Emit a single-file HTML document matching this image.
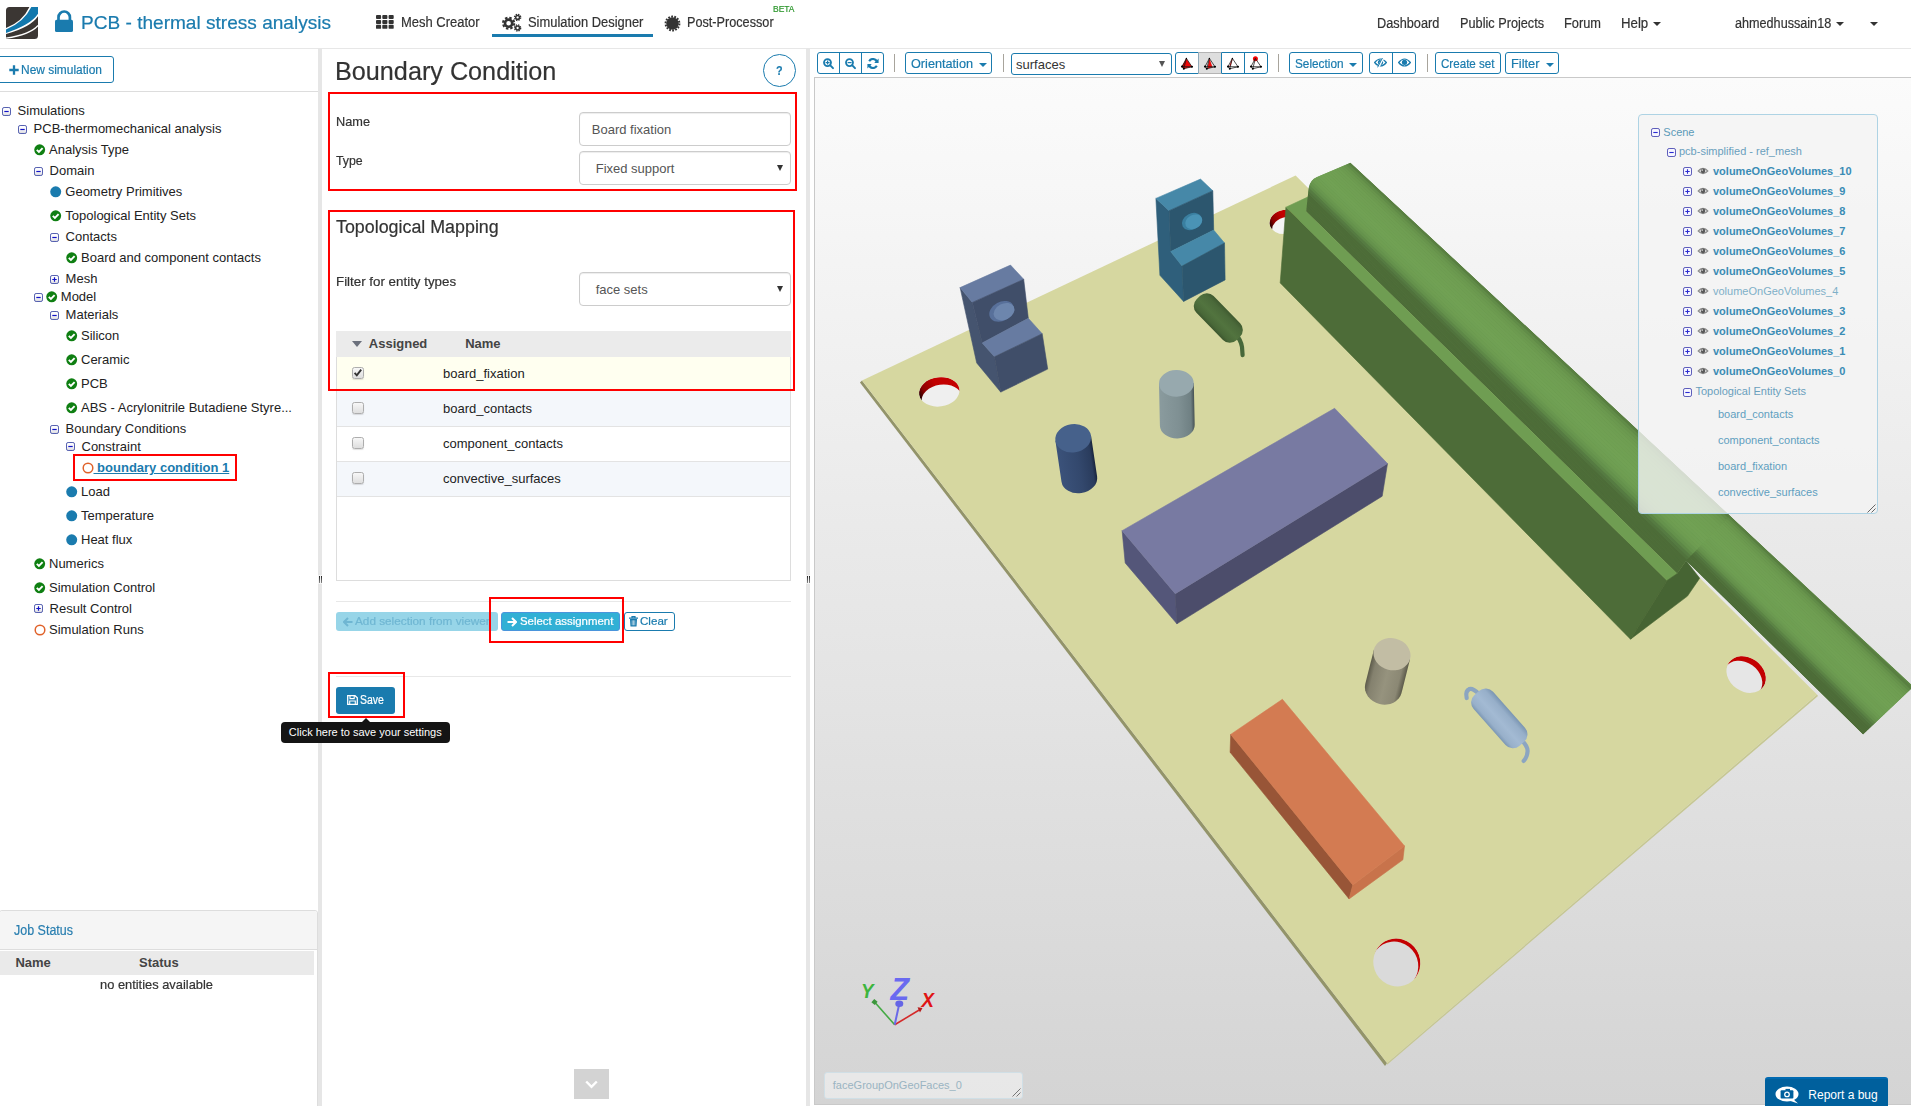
<!DOCTYPE html>
<html><head><meta charset="utf-8"><title>PCB - thermal stress analysis</title>
<style>
*{box-sizing:border-box;margin:0;padding:0}
html,body{width:1911px;height:1106px;overflow:hidden;background:#fff}
body{font-family:"Liberation Sans",sans-serif;font-size:13px;color:#333;position:relative}
.a{position:absolute}
.t{position:absolute;white-space:nowrap;transform-origin:0 50%;line-height:1;-webkit-text-stroke:.2px currentColor}
.f{display:inline-block;white-space:nowrap;transform-origin:0 50%}
.blue{color:#1a7bae}
/* header */
#hdr{left:0;top:0;width:1911px;height:49px;background:#fff;border-bottom:1px solid #e7e7e7}
.car{width:0;height:0;border-left:4px solid transparent;border-right:4px solid transparent;border-top:4px solid #333}
/* panels */
#left{left:0;top:49px;width:318px;height:1057px;background:#fff}
#sp1{left:318px;top:48px;width:4px;height:1058px;background:#e6e6e6}
#mid{left:322px;top:49px;width:484px;height:1057px;background:#fff}
#sp2{left:806px;top:48px;width:4px;height:1058px;background:#e6e6e6}
#view{left:810px;top:49px;width:1101px;height:1057px;background:#fff}
#canvas{left:814px;top:77px;width:1097px;height:1028px;border:1px solid #c9c9c9;border-right:none;background:linear-gradient(#fbfbfb,#d4d4d4);overflow:hidden}
.btn{position:absolute;border:1px solid #1a7bae;border-radius:3px;background:#fff;color:#1a7bae;height:22px}
.rb{position:absolute;border:2px solid #ff0000;z-index:5}
.inp{border:1px solid #ccc;border-radius:4px;background:#fff;box-shadow:inset 0 1px 1px rgba(0,0,0,.075)}
.arr{width:0;height:0;border-left:3.5px solid transparent;border-right:3.5px solid transparent;border-top:6px solid #333}
.cb{width:12px;height:12px;border:1px solid #adadad;border-radius:2.5px;background:linear-gradient(#f7f7f7,#dedede);box-shadow:0 1px 1px rgba(0,0,0,.12)}
.sep{width:1px;height:18px;background:#a8a49c}
/* tree */
.ti{position:absolute;width:11px;height:11px}
.tx{position:absolute;white-space:nowrap;font-size:13px;line-height:15px;color:#222}
</style></head><body>
<div id="hdr" class="a"></div>
<div id="left" class="a"></div>
<div id="sp1" class="a"></div>
<div id="mid" class="a"></div>
<div id="sp2" class="a"></div>
<div id="view" class="a"></div>
<div id="canvas" class="a"></div>

<svg class="a" style="left:6px;top:7px" width="32" height="32" viewBox="0 0 32 32">
<defs><clipPath id="lg"><path d="M3.5 0 H32 V28.5 A3.5 3.5 0 0 1 28.5 32 H0 V3.5 A3.5 3.5 0 0 1 3.5 0 Z"></path></clipPath></defs>
<g clip-path="url(#lg)"><rect width="32" height="32" fill="#3b3633"></rect>
<path d="M0 21 Q16.7 14.5 23.4 0 L32 0 L32 9.2 Q25 20 0 27.1 Z" fill="#fff"></path>
<path d="M0 22.4 Q17.75 15.6 25.3 0 L32 0 L32 6.8 Q24.6 18.05 0 25.9 Z" fill="#1278ad"></path>
<path d="M0 31.2 Q24.6 27.45 32 18.5" fill="none" stroke="#fff" stroke-width="1.2"></path>
</g></svg>
<svg class="a" style="left:54px;top:9px" width="20" height="24" viewBox="0 0 20 24">
<path d="M4.5 12 V8.2 a5.7 5.7 0 0 1 11.4 0 V12" fill="none" stroke="#1a7bae" stroke-width="2.7"></path>
<rect x="1" y="10.8" width="18" height="12.2" rx="1.6" fill="#1a7bae"></rect></svg>
<span class="t blue" style="left: 81px; font-size: 18.5px; top: 13.94px; transform: scaleX(1.0304);">PCB - thermal stress analysis</span>
<svg class="a" style="left:376px;top:15px" width="18" height="14" viewBox="0 0 18 14" fill="#333"><rect x="0" y="0" width="5.1" height="4" rx=".9"></rect><rect x="6.3" y="0" width="5.1" height="4" rx=".9"></rect><rect x="12.6" y="0" width="5.1" height="4" rx=".9"></rect><rect x="0" y="4.9" width="5.1" height="4" rx=".9"></rect><rect x="6.3" y="4.9" width="5.1" height="4" rx=".9"></rect><rect x="12.6" y="4.9" width="5.1" height="4" rx=".9"></rect><rect x="0" y="9.8" width="5.1" height="4" rx=".9"></rect><rect x="6.3" y="9.8" width="5.1" height="4" rx=".9"></rect><rect x="12.6" y="9.8" width="5.1" height="4" rx=".9"></rect></svg>
<span class="t" style="left: 401px; font-size: 14px; top: 15.15px; transform: scaleX(0.9268);">Mesh Creator</span>
<svg class="a" style="left:502px;top:13px" width="20" height="19" viewBox="0 0 20 19">
<g fill="none" stroke="#333">
<circle cx="6.6" cy="10.2" r="3.6" stroke-width="2.6"></circle>
<circle cx="6.6" cy="10.2" r="5.6" stroke-width="2" stroke-dasharray="2.5 1.9"></circle>
<circle cx="15.6" cy="4.4" r="1.9" stroke-width="1.5"></circle>
<circle cx="15.6" cy="4.4" r="3.1" stroke-width="1.3" stroke-dasharray="1.4 1.05"></circle>
<circle cx="15.6" cy="15" r="1.9" stroke-width="1.5"></circle>
<circle cx="15.6" cy="15" r="3.1" stroke-width="1.3" stroke-dasharray="1.4 1.05"></circle>
</g></svg>
<span class="t" style="left: 527.6px; font-size: 14px; top: 15.15px; transform: scaleX(0.921);">Simulation Designer</span>
<div class="a" style="left:492px;top:34px;width:161px;height:3px;background:#1a7bae"></div>
<svg class="a" style="left:664px;top:15px" width="17" height="17" viewBox="0 0 17 17">
<circle cx="8.5" cy="8.5" r="6.2" fill="#333"></circle><circle cx="8.5" cy="8.5" r="6.9" fill="none" stroke="#333" stroke-width="2" stroke-dasharray="1.8 1.3"></circle></svg>
<span class="t" style="left: 687.4px; font-size: 14px; top: 15.15px; transform: scaleX(0.9049);">Post-Processor</span>
<span class="t" style="left: 773px; font-size: 9px; color: rgb(44, 150, 44); top: 4.98px; transform: scaleX(0.9412);">BETA</span>
<span class="t" style="left: 1376.7px; font-size: 14px; top: 16.15px; transform: scaleX(0.9095);">Dashboard</span>
<span class="t" style="left: 1459.5px; font-size: 14px; top: 16.15px; transform: scaleX(0.9083);">Public Projects</span>
<span class="t" style="left: 1564px; font-size: 14px; top: 16.15px; transform: scaleX(0.9146);">Forum</span>
<span class="t" style="left: 1621.3px; font-size: 14px; top: 16.15px; transform: scaleX(0.9445);">Help</span>
<div class="a car" style="left:1653px;top:22px"></div>
<span class="t" style="left: 1734.8px; font-size: 14px; top: 16.15px; transform: scaleX(0.9021);">ahmedhussain18</span>
<div class="a car" style="left:1836px;top:22px"></div>
<div class="a car" style="left:1870px;top:22px"></div>
<svg class="a" width="0" height="0" style="left:0;top:0"><defs><linearGradient id="pmg" x1="0" y1="0" x2="0" y2="1"><stop offset="0" stop-color="#fff"></stop><stop offset=".55" stop-color="#f6f6f8"></stop><stop offset="1" stop-color="#d8d8dc"></stop></linearGradient></defs></svg>
<!--HEADER-->
<div class="btn" style="left:-3px;top:56px;width:117px;height:27px"></div>
<svg class="a" style="left:9px;top:65px" width="10" height="10" viewBox="0 0 10 10"><path d="M5 0.3V9.7M0.3 5H9.7" stroke="#1a7bae" stroke-width="2.3"></path></svg>
<span class="t blue" style="left: 21.3px; font-size: 12px; top: 63.84px; transform: scaleX(0.9954);">New simulation</span>
<div class="a" style="left:0;top:91px;width:318px;height:1px;background:#ddd"></div>
<svg class="a" style="left:2.2px;top:106.8px" width="9" height="9" viewBox="0 0 9 9"><rect x=".5" y=".5" width="8" height="8" rx="1.6" fill="url(#pmg)" stroke="#5560b0"></rect><path d="M2.3 4.5H6.7" stroke="#1212c8" stroke-width="1.2"></path></svg>
<span class="tx" style="left:17.6px;top:103px">Simulations</span>
<svg class="a" style="left:18.2px;top:124.5px" width="9" height="9" viewBox="0 0 9 9"><rect x=".5" y=".5" width="8" height="8" rx="1.6" fill="url(#pmg)" stroke="#5560b0"></rect><path d="M2.3 4.5H6.7" stroke="#1212c8" stroke-width="1.2"></path></svg>
<span class="tx" style="left:33.6px;top:121px">PCB-thermomechanical analysis</span>
<svg class="a" style="left:33.6px;top:143.9px" width="12" height="12" viewBox="0 0 12 12"><circle cx="5.7" cy="5.8" r="5.45" fill="#0f7f12"></circle><path d="M2.8 5.9 L4.9 8 L8.6 4.1" fill="none" stroke="#fff" stroke-width="1.9"></path></svg>
<span class="tx" style="left:49.0px;top:142px">Analysis Type</span>
<svg class="a" style="left:34.2px;top:166.8px" width="9" height="9" viewBox="0 0 9 9"><rect x=".5" y=".5" width="8" height="8" rx="1.6" fill="url(#pmg)" stroke="#5560b0"></rect><path d="M2.3 4.5H6.7" stroke="#1212c8" stroke-width="1.2"></path></svg>
<span class="tx" style="left:49.6px;top:163px">Domain</span>
<svg class="a" style="left:49.9px;top:185.6px" width="12" height="12" viewBox="0 0 12 12"><circle cx="5.7" cy="5.8" r="5.5" fill="#1a7bae"></circle></svg>
<span class="tx" style="left:65.3px;top:184px">Geometry Primitives</span>
<svg class="a" style="left:49.9px;top:209.7px" width="12" height="12" viewBox="0 0 12 12"><circle cx="5.7" cy="5.8" r="5.45" fill="#0f7f12"></circle><path d="M2.8 5.9 L4.9 8 L8.6 4.1" fill="none" stroke="#fff" stroke-width="1.9"></path></svg>
<span class="tx" style="left:65.3px;top:208px">Topological Entity Sets</span>
<svg class="a" style="left:50.4px;top:232.6px" width="9" height="9" viewBox="0 0 9 9"><rect x=".5" y=".5" width="8" height="8" rx="1.6" fill="url(#pmg)" stroke="#5560b0"></rect><path d="M2.3 4.5H6.7" stroke="#1212c8" stroke-width="1.2"></path></svg>
<span class="tx" style="left:65.6px;top:229px">Contacts</span>
<svg class="a" style="left:66.0px;top:251.8px" width="12" height="12" viewBox="0 0 12 12"><circle cx="5.7" cy="5.8" r="5.45" fill="#0f7f12"></circle><path d="M2.8 5.9 L4.9 8 L8.6 4.1" fill="none" stroke="#fff" stroke-width="1.9"></path></svg>
<span class="tx" style="left:81.0px;top:250px">Board and component contacts</span>
<svg class="a" style="left:50.4px;top:274.6px" width="9" height="9" viewBox="0 0 9 9"><rect x=".5" y=".5" width="8" height="8" rx="1.6" fill="url(#pmg)" stroke="#5560b0"></rect><path d="M2.3 4.5H6.7 M4.5 2.3V6.7" stroke="#1212c8" stroke-width="1.2"></path></svg>
<span class="tx" style="left:65.6px;top:271px">Mesh</span>
<svg class="a" style="left:34.2px;top:292.6px" width="9" height="9" viewBox="0 0 9 9"><rect x=".5" y=".5" width="8" height="8" rx="1.6" fill="url(#pmg)" stroke="#5560b0"></rect><path d="M2.3 4.5H6.7" stroke="#1212c8" stroke-width="1.2"></path></svg>
<svg class="a" style="left:46.0px;top:291.0px" width="12" height="12" viewBox="0 0 12 12"><circle cx="5.7" cy="5.8" r="5.45" fill="#0f7f12"></circle><path d="M2.8 5.9 L4.9 8 L8.6 4.1" fill="none" stroke="#fff" stroke-width="1.9"></path></svg>
<span class="tx" style="left:60.8px;top:289px">Model</span>
<svg class="a" style="left:50.4px;top:310.5px" width="9" height="9" viewBox="0 0 9 9"><rect x=".5" y=".5" width="8" height="8" rx="1.6" fill="url(#pmg)" stroke="#5560b0"></rect><path d="M2.3 4.5H6.7" stroke="#1212c8" stroke-width="1.2"></path></svg>
<span class="tx" style="left:65.6px;top:307px">Materials</span>
<svg class="a" style="left:66.0px;top:329.9px" width="12" height="12" viewBox="0 0 12 12"><circle cx="5.7" cy="5.8" r="5.45" fill="#0f7f12"></circle><path d="M2.8 5.9 L4.9 8 L8.6 4.1" fill="none" stroke="#fff" stroke-width="1.9"></path></svg>
<span class="tx" style="left:81.0px;top:328px">Silicon</span>
<svg class="a" style="left:66.0px;top:353.7px" width="12" height="12" viewBox="0 0 12 12"><circle cx="5.7" cy="5.8" r="5.45" fill="#0f7f12"></circle><path d="M2.8 5.9 L4.9 8 L8.6 4.1" fill="none" stroke="#fff" stroke-width="1.9"></path></svg>
<span class="tx" style="left:81.0px;top:352px">Ceramic</span>
<svg class="a" style="left:66.0px;top:377.6px" width="12" height="12" viewBox="0 0 12 12"><circle cx="5.7" cy="5.8" r="5.45" fill="#0f7f12"></circle><path d="M2.8 5.9 L4.9 8 L8.6 4.1" fill="none" stroke="#fff" stroke-width="1.9"></path></svg>
<span class="tx" style="left:81.0px;top:376px">PCB</span>
<svg class="a" style="left:66.0px;top:401.9px" width="12" height="12" viewBox="0 0 12 12"><circle cx="5.7" cy="5.8" r="5.45" fill="#0f7f12"></circle><path d="M2.8 5.9 L4.9 8 L8.6 4.1" fill="none" stroke="#fff" stroke-width="1.9"></path></svg>
<span class="tx" style="left:81.0px;top:400px">ABS - Acrylonitrile Butadiene Styre...</span>
<svg class="a" style="left:50.4px;top:424.5px" width="9" height="9" viewBox="0 0 9 9"><rect x=".5" y=".5" width="8" height="8" rx="1.6" fill="url(#pmg)" stroke="#5560b0"></rect><path d="M2.3 4.5H6.7" stroke="#1212c8" stroke-width="1.2"></path></svg>
<span class="tx" style="left:65.6px;top:421px">Boundary Conditions</span>
<svg class="a" style="left:66.4px;top:442.4px" width="9" height="9" viewBox="0 0 9 9"><rect x=".5" y=".5" width="8" height="8" rx="1.6" fill="url(#pmg)" stroke="#5560b0"></rect><path d="M2.3 4.5H6.7" stroke="#1212c8" stroke-width="1.2"></path></svg>
<span class="tx" style="left:81.5px;top:439px">Constraint</span>
<svg class="a" style="left:66.0px;top:485.6px" width="12" height="12" viewBox="0 0 12 12"><circle cx="5.7" cy="5.8" r="5.5" fill="#1a7bae"></circle></svg>
<span class="tx" style="left:81.0px;top:484px">Load</span>
<svg class="a" style="left:66.0px;top:509.7px" width="12" height="12" viewBox="0 0 12 12"><circle cx="5.7" cy="5.8" r="5.5" fill="#1a7bae"></circle></svg>
<span class="tx" style="left:81.0px;top:508px">Temperature</span>
<svg class="a" style="left:66.0px;top:533.5px" width="12" height="12" viewBox="0 0 12 12"><circle cx="5.7" cy="5.8" r="5.5" fill="#1a7bae"></circle></svg>
<span class="tx" style="left:81.0px;top:532px">Heat flux</span>
<svg class="a" style="left:33.6px;top:557.6px" width="12" height="12" viewBox="0 0 12 12"><circle cx="5.7" cy="5.8" r="5.45" fill="#0f7f12"></circle><path d="M2.8 5.9 L4.9 8 L8.6 4.1" fill="none" stroke="#fff" stroke-width="1.9"></path></svg>
<span class="tx" style="left:49.0px;top:556px">Numerics</span>
<svg class="a" style="left:33.6px;top:581.7px" width="12" height="12" viewBox="0 0 12 12"><circle cx="5.7" cy="5.8" r="5.45" fill="#0f7f12"></circle><path d="M2.8 5.9 L4.9 8 L8.6 4.1" fill="none" stroke="#fff" stroke-width="1.9"></path></svg>
<span class="tx" style="left:49.0px;top:580px">Simulation Control</span>
<svg class="a" style="left:34.2px;top:604.3px" width="9" height="9" viewBox="0 0 9 9"><rect x=".5" y=".5" width="8" height="8" rx="1.6" fill="url(#pmg)" stroke="#5560b0"></rect><path d="M2.3 4.5H6.7 M4.5 2.3V6.7" stroke="#1212c8" stroke-width="1.2"></path></svg>
<span class="tx" style="left:49.6px;top:601px">Result Control</span>
<svg class="a" style="left:33.6px;top:623.8px" width="12" height="12" viewBox="0 0 12 12"><circle cx="6" cy="6" r="4.8" fill="#fff" stroke="#e0622a" stroke-width="1.5"></circle></svg>
<span class="tx" style="left:49.0px;top:622px">Simulation Runs</span>
<div class="rb" style="left:73px;top:454px;width:164px;height:27px"></div>
<svg class="a" style="left:81.5px;top:461.8px" width="12" height="12" viewBox="0 0 12 12"><circle cx="6" cy="6" r="4.8" fill="#fff" stroke="#e0622a" stroke-width="1.5"></circle></svg>
<span class="tx" style="left:93.5px;top:460px;color:#1a7bae;font-weight:bold;text-decoration:underline">&nbsp;boundary condition 1</span>
<div class="a" style="left:-1px;top:910px;width:319px;height:200px;border:1px solid #ddd;border-radius:3px;background:#fff"></div>
<div class="a" style="left:0;top:911px;width:317px;height:39px;background:#f5f5f5;border-bottom:1px solid #ddd;border-radius:3px 3px 0 0"></div>
<span class="t" style="left: 14px; font-size: 14px; color: rgb(42, 127, 176); top: 923.15px; transform: scaleX(0.8918);">Job Status</span>
<div class="a" style="left:0;top:951px;width:314px;height:24px;background:#eaeaea"></div>
<span class="tx" style="left:15.4px;top:955px;font-weight:bold;color:#444">Name</span>
<span class="tx" style="left:139px;top:955px;font-weight:bold;color:#444">Status</span>
<span class="t" style="left: 100.4px; font-size: 13px; color: rgb(51, 51, 51); top: 978px; transform: scaleX(0.9895);">no entities available</span>
<!--LEFT-->
<span class="t" style="left: 335.3px; font-size: 26px; color: rgb(51, 51, 51); top: 57.89px; transform: scaleX(0.9694);">Boundary Condition</span>
<div class="a" style="left:763px;top:54px;width:33px;height:33px;border:1px solid #1a7bae;border-radius:50%"></div>
<span class="t blue" style="left: 776.3px; font-size: 13px; font-weight: bold; top: 64.3px; transform: scaleX(0.8299);">?</span>
<div class="rb" style="left:328px;top:92px;width:469px;height:99px"></div>
<span class="t" style="left: 335.5px; font-size: 13px; top: 115px; transform: scaleX(0.9802);">Name</span>
<span class="t" style="left: 336px; font-size: 13px; top: 153.7px; transform: scaleX(0.9472);">Type</span>
<div class="a inp" style="left:579px;top:112px;width:212px;height:34px"></div>
<span class="tx" style="left:591.8px;top:122px;color:#555">Board fixation</span>
<div class="a inp" style="left:579px;top:151px;width:212px;height:34px"></div>
<span class="tx" style="left:595.7px;top:161px;color:#555">Fixed support</span>
<div class="a arr" style="left:777px;top:165px"></div>
<div class="rb" style="left:328px;top:210px;width:467px;height:181px"></div>
<span class="t" style="left: 335.8px; font-size: 18px; color: rgb(51, 51, 51); top: 218.46px; transform: scaleX(0.9914);">Topological Mapping</span>
<span class="t" style="left: 335.6px; font-size: 13px; top: 275.2px; transform: scaleX(1.0261);">Filter for entity types</span>
<div class="a inp" style="left:579px;top:272px;width:212px;height:34px"></div>
<span class="tx" style="left:595.7px;top:282px;color:#555">face sets</span>
<div class="a arr" style="left:777px;top:286px"></div>
<div class="a" style="left:336px;top:331px;width:455px;height:250px;border:1px solid #ddd;border-top:none;background:#fff"></div>
<div class="a" style="left:336px;top:331px;width:455px;height:26px;background:#ebebeb"></div>
<div class="a" style="left:351.8px;top:340.5px;width:0;height:0;border-left:5px solid transparent;border-right:5px solid transparent;border-top:6.5px solid #6b707c"></div>
<span class="tx" style="left:368.8px;top:336px;font-weight:bold;color:#444">Assigned</span>
<span class="tx" style="left:465.2px;top:336px;font-weight:bold;color:#444">Name</span>
<div class="a" style="left:337px;top:357px;width:453px;height:33px;background:#fffff0;border-bottom:1px solid #e3e3e3"></div>
<div class="a cb" style="left:352px;top:367px"><svg width="10" height="10" viewBox="0 0 10 10" style="position:absolute;left:0;top:0"><path d="M1.6 4.9 L3.8 7.3 L8.2 1.6" fill="none" stroke="#333" stroke-width="1.9"></path></svg></div>
<span class="tx" style="left:443px;top:366px">board_fixation</span>
<div class="a" style="left:337px;top:390px;width:453px;height:37px;background:#f4f7fb;border-bottom:1px solid #e3e3e3"></div>
<div class="a cb" style="left:352px;top:402px"></div>
<span class="tx" style="left:443px;top:401px">board_contacts</span>
<div class="a" style="left:337px;top:427px;width:453px;height:35px;background:#fff;border-bottom:1px solid #e3e3e3"></div>
<div class="a cb" style="left:352px;top:437px"></div>
<span class="tx" style="left:443px;top:436px">component_contacts</span>
<div class="a" style="left:337px;top:462px;width:453px;height:35px;background:#f4f7fb;border-bottom:1px solid #e3e3e3"></div>
<div class="a cb" style="left:352px;top:472px"></div>
<span class="tx" style="left:443px;top:471px">convective_surfaces</span>
<div class="a" style="left:336px;top:601px;width:455px;height:1px;background:#e8e8e8"></div>
<div class="a" style="left:336px;top:612px;width:162px;height:19px;background:#97d5e8;border-radius:3px"></div>
<svg class="a" style="left:342.5px;top:616.5px" width="10" height="10" viewBox="0 0 10 10"><path d="M9.5 5H2 M5 1L1 5L5 9" fill="none" stroke="#6fb6d2" stroke-width="2"></path></svg>
<span class="t" style="left: 355.2px; font-size: 11px; color: rgb(111, 182, 210); top: 616.49px; transform: scaleX(1.0694);">Add selection from viewer</span>
<div class="rb" style="left:489px;top:597px;width:135px;height:46px"></div>
<div class="a" style="left:500.5px;top:612px;width:119px;height:19px;background:#31b0d5;border:1px solid #4a95dc;border-radius:3px"></div>
<svg class="a" style="left:506.5px;top:616.5px" width="10" height="10" viewBox="0 0 10 10"><path d="M0.5 5H8 M5 1L9 5L5 9" fill="none" stroke="#fff" stroke-width="2"></path></svg>
<span class="t" style="left: 519.7px; font-size: 11px; color: rgb(255, 255, 255); top: 616.49px; transform: scaleX(1.039);">Select assignment</span>
<div class="btn" style="left:624px;top:612px;width:51px;height:19px"></div>
<svg class="a" style="left:629px;top:616px" width="9" height="11" viewBox="0 0 9 11"><path d="M0 2.2H9 M3 2V0.6H6V2" fill="none" stroke="#1a7bae" stroke-width="1.2"></path><path d="M1 3H8L7.5 10.6H1.5Z" fill="#1a7bae"></path><path d="M3.2 4.3V9.3M4.5 4.3V9.3M5.8 4.3V9.3" stroke="#fff" stroke-width=".6"></path></svg>
<span class="t blue" style="left: 640.2px; font-size: 11px; top: 616.49px; transform: scaleX(1.0534);">Clear</span>
<div class="a" style="left:336px;top:676px;width:455px;height:1px;background:#e8e8e8"></div>
<div class="rb" style="left:328px;top:672px;width:77px;height:46px"></div>
<div class="a" style="left:336px;top:687px;width:59px;height:27px;background:#1a7bae;border-radius:3px"></div>
<svg class="a" style="left:346.5px;top:695.3px" width="11" height="10" viewBox="0 0 11 10"><path d="M0.7 0.7H8L10.3 2.8V9.3H0.7Z" fill="none" stroke="#fff" stroke-width="1.3"></path><path d="M3 0.7V3.6H7.2V0.7M2.7 9.3V6H8.3V9.3" fill="none" stroke="#fff" stroke-width="1.1"></path></svg>
<span class="t" style="left: 359.9px; font-size: 12px; color: rgb(255, 255, 255); top: 694.44px; transform: scaleX(0.8736);">Save</span>
<div class="a" style="left:281px;top:722px;width:169px;height:21px;background:#141414;border-radius:4px"></div>
<div class="a" style="left:361px;top:717.5px;width:0;height:0;border-left:5px solid transparent;border-right:5px solid transparent;border-bottom:5px solid #141414"></div>
<span class="tx" style="left:288.8px;top:724.6px;font-size:11px;color:#fff">Click here to save your settings</span>
<div class="a" style="left:574px;top:1069px;width:35px;height:30px;background:#d3d3d3"></div>
<svg class="a" style="left:585px;top:1080px" width="13" height="9" viewBox="0 0 13 9"><path d="M1.2 1.5L6.5 6.8L11.8 1.5" fill="none" stroke="#fff" stroke-width="2.4"></path></svg>
<div class="a" style="left:318px;top:575px;width:4px;height:9px;background:#f4f4f4"></div><div class="a" style="left:319px;top:576px;width:1px;height:7px;background:linear-gradient(#222,#888)"></div><div class="a" style="left:321px;top:576px;width:1px;height:7px;background:linear-gradient(#222,#888)"></div><div class="a" style="left:806px;top:575px;width:4px;height:9px;background:#f4f4f4"></div><div class="a" style="left:807px;top:576px;width:1px;height:7px;background:linear-gradient(#222,#888)"></div><div class="a" style="left:809px;top:576px;width:1px;height:7px;background:linear-gradient(#222,#888)"></div>
<!--MID-->
<div class="btn" style="left:817px;top:52px;width:67px"></div>
<div class="a" style="left:839px;top:52px;width:1px;height:22px;background:#1a7bae"></div><div class="a" style="left:861px;top:52px;width:1px;height:22px;background:#1a7bae"></div>
<svg class="a" style="left:823px;top:58px" width="12" height="12" viewBox="0 0 12 12"><circle cx="4.5" cy="4.6" r="3.5" fill="none" stroke="#1a7bae" stroke-width="1.8"></circle><path d="M7.3 7.4L10 10.1" stroke="#1a7bae" stroke-width="2" stroke-linecap="round"></path><path d="M2.6 4.6H6.6M4.6 2.6V6.6" stroke="#1a7bae" stroke-width="1.2"></path></svg>
<svg class="a" style="left:845px;top:58px" width="12" height="12" viewBox="0 0 12 12"><circle cx="4.5" cy="4.6" r="3.5" fill="none" stroke="#1a7bae" stroke-width="1.8"></circle><path d="M7.3 7.4L10 10.1" stroke="#1a7bae" stroke-width="2" stroke-linecap="round"></path><path d="M2.6 4.6H6.6" stroke="#1a7bae" stroke-width="1.2"></path></svg>
<svg class="a" style="left:867px;top:57.5px" width="12" height="11" viewBox="0 0 12 11"><path d="M9.9 3.9A4.2 4.2 0 0 0 2.2 3.2 M2.1 7.1A4.2 4.2 0 0 0 9.8 7.8" fill="none" stroke="#1a7bae" stroke-width="2.1"></path><path d="M11.6 0.6V5H7.2Z M0.4 10.4V6H4.8Z" fill="#1a7bae"></path></svg>
<div class="a sep" style="left:894px;top:54px"></div>
<div class="btn" style="left:905px;top:52px;width:87px"></div>
<span class="t blue" style="left: 911px; font-size: 13px; top: 57px; transform: scaleX(0.9749);">Orientation</span>
<div class="a car" style="left:978.5px;top:63px;border-top-color:#1a7bae"></div>
<div class="a sep" style="left:1003px;top:54px"></div>
<div class="btn" style="left:1011px;top:53px;width:161px;height:22px"></div>
<span class="tx" style="left:1016px;top:57px;color:#333">surfaces</span>
<div class="a arr" style="left:1158.5px;top:61px;border-top-color:#555"></div>
<div class="btn" style="left:1175px;top:52px;width:93px"></div>
<div class="a" style="left:1198px;top:52px;width:24px;height:22px;background:#dedede;border:1px solid #b4b4b4;border-left-color:#8ea8b8;border-right-color:#1a7bae"></div>
<div class="a" style="left:1244px;top:52px;width:1px;height:22px;background:#1a7bae"></div>
<svg class="a" style="left:1180px;top:56px" width="14" height="14" viewBox="0 0 14 14"><path d="M6.4 2.4L2 10.6L3.8 12.7L12 10.8Z" fill="#f00808"></path><path d="M6.4 2.4L2 10.6L3.8 12.7Z" fill="#c00000"></path><path d="M6.4 2.4L2 10.6L3.8 12.7L12 10.8Z M6.4 2.4L3.8 12.7 M2 10.6L12 10.8" fill="none" stroke="#1a1a1a" stroke-width=".75"></path><circle cx="2" cy="10.6" r="1.05" fill="#000"></circle><circle cx="3.8" cy="12.7" r="1.05" fill="#000"></circle><circle cx="12" cy="10.8" r="1.05" fill="#000"></circle><circle cx="6.4" cy="2.4" r=".7" fill="#000"></circle></svg>
<svg class="a" style="left:1203px;top:56px" width="14" height="14" viewBox="0 0 14 14"><path d="M6.4 2.4L4.3999999999999995 12.7L9.5 11.200000000000001Z" fill="#f00808"></path><path d="M6.4 2.4L2 10.6L3.8 12.7L12 10.8Z M6.4 2.4L3.8 12.7 M2 10.6L12 10.8" fill="none" stroke="#1a1a1a" stroke-width=".75"></path><circle cx="2" cy="10.6" r="1.05" fill="#000"></circle><circle cx="3.8" cy="12.7" r="1.05" fill="#000"></circle><circle cx="12" cy="10.8" r="1.05" fill="#000"></circle><circle cx="6.4" cy="2.4" r=".7" fill="#000"></circle></svg>
<svg class="a" style="left:1226px;top:56px" width="14" height="14" viewBox="0 0 14 14"><path d="M6.1000000000000005 3.4L3.8 10.7" stroke="#f00808" stroke-width="1"></path><path d="M6.4 2.4L2 10.6L3.8 12.7L12 10.8Z M6.4 2.4L3.8 12.7 M2 10.6L12 10.8" fill="none" stroke="#1a1a1a" stroke-width=".75"></path><circle cx="2" cy="10.6" r="1.05" fill="#000"></circle><circle cx="3.8" cy="12.7" r="1.05" fill="#000"></circle><circle cx="12" cy="10.8" r="1.05" fill="#000"></circle><circle cx="6.4" cy="2.4" r=".7" fill="#000"></circle></svg>
<svg class="a" style="left:1249px;top:56px" width="14" height="14" viewBox="0 0 14 14"><circle cx="6.4" cy="2.6999999999999997" r="2.5" fill="#f80000"></circle><path d="M6.4 2.4L2 10.6L3.8 12.7L12 10.8Z M6.4 2.4L3.8 12.7 M2 10.6L12 10.8" fill="none" stroke="#1a1a1a" stroke-width=".75"></path><circle cx="2" cy="10.6" r="1.05" fill="#000"></circle><circle cx="3.8" cy="12.7" r="1.05" fill="#000"></circle><circle cx="12" cy="10.8" r="1.05" fill="#000"></circle></svg>
<div class="a sep" style="left:1278px;top:54px"></div>
<div class="btn" style="left:1289px;top:52px;width:74px"></div>
<span class="t blue" style="left: 1295px; font-size: 13px; top: 57px; transform: scaleX(0.9068);">Selection</span>
<div class="a car" style="left:1349px;top:63px;border-top-color:#1a7bae"></div>
<div class="btn" style="left:1369px;top:52px;width:47px"></div>
<div class="a" style="left:1392px;top:52px;width:1px;height:22px;background:#1a7bae"></div>
<svg class="a" style="left:1374px;top:58px" width="13" height="10" viewBox="0 0 13 10"><path d="M0.6 4.5Q6.5 -2.5 12.4 4.5Q6.5 11.5 0.6 4.5Z" fill="none" stroke="#1a7bae" stroke-width="1.2"></path><circle cx="6.5" cy="4.3" r="2.6" fill="#1a7bae"></circle><path d="M9.5 -0.5L4 9.5" stroke="#fff" stroke-width="2.2"></path><path d="M8.6 -0.3L3.6 9.3" stroke="#1a7bae" stroke-width="1"></path></svg>
<svg class="a" style="left:1397.5px;top:58px" width="13" height="10" viewBox="0 0 13 10"><path d="M0.6 4.5Q6.5 -2.5 12.4 4.5Q6.5 11.5 0.6 4.5Z" fill="none" stroke="#1a7bae" stroke-width="1.2"></path><circle cx="6.5" cy="4.3" r="2.6" fill="#1a7bae"></circle></svg>
<div class="a sep" style="left:1427px;top:54px"></div>
<div class="btn" style="left:1435px;top:52px;width:66px"></div>
<span class="t blue" style="left: 1441px; font-size: 13px; top: 57px; transform: scaleX(0.8919);">Create set</span>
<div class="btn" style="left:1505px;top:52px;width:54px"></div>
<span class="t blue" style="left: 1511px; font-size: 13px; top: 57px; transform: scaleX(0.9865);">Filter</span>
<div class="a car" style="left:1545.5px;top:63px;border-top-color:#1a7bae"></div>
<!--TOOLBAR-->
<svg class="a" style="left:815px;top:78px" width="1096" height="1027" viewBox="815 78 1096 1027">
<defs>
<linearGradient id="cylg" gradientUnits="userSpaceOnUse" x1="1500" y1="420" x2="1612" y2="305">
<stop offset="0" stop-color="#4d6c38"></stop><stop offset=".28" stop-color="#4f6f3a"></stop><stop offset=".42" stop-color="#628d48"></stop><stop offset=".58" stop-color="#70a053"></stop><stop offset=".85" stop-color="#6d9c50"></stop><stop offset="1" stop-color="#557a3e"></stop></linearGradient>
<linearGradient id="cdb" x1="0" x2="1"><stop offset="0" stop-color="#3b527a"></stop><stop offset=".55" stop-color="#33486d"></stop><stop offset=".9" stop-color="#2a3c5d"></stop><stop offset="1" stop-color="#18243c"></stop></linearGradient>
<linearGradient id="cgr" x1="0" x2="1"><stop offset="0" stop-color="#8a9b9e"></stop><stop offset=".55" stop-color="#7f9093"></stop><stop offset=".9" stop-color="#6f8083"></stop><stop offset="1" stop-color="#465154"></stop></linearGradient>
<linearGradient id="cbe" x1="0" x2="1"><stop offset="0" stop-color="#5d5b4b"></stop><stop offset=".14" stop-color="#84816e"></stop><stop offset=".5" stop-color="#96937e"></stop><stop offset=".85" stop-color="#8b8874"></stop><stop offset="1" stop-color="#5c5a4a"></stop></linearGradient>
<linearGradient id="capg" x1="0" y1="0" x2="0" y2="1"><stop offset="0" stop-color="#3f5a30"></stop><stop offset=".2" stop-color="#4b6a3a"></stop><stop offset=".55" stop-color="#52743f"></stop><stop offset=".85" stop-color="#496838"></stop><stop offset="1" stop-color="#3c562e"></stop></linearGradient>
<linearGradient id="capb" x1="0" y1="0" x2="0" y2="1"><stop offset="0" stop-color="#7a95b2"></stop><stop offset=".2" stop-color="#97afc9"></stop><stop offset=".55" stop-color="#a3bad3"></stop><stop offset=".85" stop-color="#98b0ca"></stop><stop offset="1" stop-color="#7c97b4"></stop></linearGradient>
</defs>
<polygon points="862.0,380.5 859.9,382.6 1385.0,1066.0 1387.0,1063.0" fill="#93946a"></polygon>
<polygon points="1387.0,1063.0 1386.8,1065.0 1818.0,696.0 1817.0,694.5" fill="#c6c792"></polygon>
<polygon points="862.0,380.5 1295.6,175.5 1817.0,694.5 1387.0,1063.0" fill="#d6d7a0"></polygon>
<linearGradient id="hg1" x1="0" y1="0.6" x2="1" y2="0.3"><stop offset="0" stop-color="#1a0000"></stop><stop offset=".18" stop-color="#8a0000"></stop><stop offset=".5" stop-color="#c20000"></stop><stop offset="1" stop-color="#c40000"></stop></linearGradient><mask id="hm1"><ellipse cx="939.3" cy="391.9" rx="20.3" ry="14.6" transform="rotate(-8 939.3 391.9)" fill="#fff"></ellipse><ellipse cx="941.8" cy="399.2" rx="20.3" ry="14.6" transform="rotate(-8 941.8 399.2)" fill="#000"></ellipse></mask><ellipse cx="939.3" cy="391.9" rx="20.3" ry="14.6" transform="rotate(-8 939.3 391.9)" fill="#efefef"></ellipse><g mask="url(#hm1)"><ellipse cx="939.3" cy="391.9" rx="20.6" ry="14.9" transform="rotate(-8 939.3 391.9)" fill="url(#hg1)"></ellipse></g>
<linearGradient id="hg2" x1="0" y1="0.6" x2="1" y2="0.3"><stop offset="0" stop-color="#1a0000"></stop><stop offset=".18" stop-color="#8a0000"></stop><stop offset=".5" stop-color="#c20000"></stop><stop offset="1" stop-color="#c40000"></stop></linearGradient><mask id="hm2"><ellipse cx="1285" cy="222" rx="15.5" ry="12" transform="rotate(-8 1285 222)" fill="#fff"></ellipse><ellipse cx="1287.5" cy="229" rx="15.5" ry="12" transform="rotate(-8 1287.5 229)" fill="#000"></ellipse></mask><ellipse cx="1285" cy="222" rx="15.5" ry="12" transform="rotate(-8 1285 222)" fill="#f4f4f4"></ellipse><g mask="url(#hm2)"><ellipse cx="1285" cy="222" rx="15.8" ry="12.3" transform="rotate(-8 1285 222)" fill="url(#hg2)"></ellipse></g>
<linearGradient id="hg3" x1="0.9" y1="1" x2="0.3" y2="0"><stop offset="0" stop-color="#1a0000"></stop><stop offset=".18" stop-color="#8a0000"></stop><stop offset=".5" stop-color="#c20000"></stop><stop offset="1" stop-color="#c40000"></stop></linearGradient><mask id="hm3"><ellipse cx="1746.1" cy="674.6" rx="21" ry="16.8" transform="rotate(35 1746.1 674.6)" fill="#fff"></ellipse><ellipse cx="1742.6" cy="679.1" rx="21" ry="16.8" transform="rotate(35 1742.6 679.1)" fill="#000"></ellipse></mask><ellipse cx="1746.1" cy="674.6" rx="21" ry="16.8" transform="rotate(35 1746.1 674.6)" fill="#e6e6e6"></ellipse><g mask="url(#hm3)"><ellipse cx="1746.1" cy="674.6" rx="21.3" ry="17.1" transform="rotate(35 1746.1 674.6)" fill="url(#hg3)"></ellipse></g>
<linearGradient id="hg4" x1="0.9" y1="1" x2="0.4" y2="0"><stop offset="0" stop-color="#1a0000"></stop><stop offset=".18" stop-color="#8a0000"></stop><stop offset=".5" stop-color="#c20000"></stop><stop offset="1" stop-color="#c40000"></stop></linearGradient><mask id="hm4"><ellipse cx="1396.8" cy="962.5" rx="24.2" ry="23.3" transform="rotate(60 1396.8 962.5)" fill="#fff"></ellipse><ellipse cx="1394.8" cy="965.5" rx="24.2" ry="23.3" transform="rotate(60 1394.8 965.5)" fill="#000"></ellipse></mask><ellipse cx="1396.8" cy="962.5" rx="24.2" ry="23.3" transform="rotate(60 1396.8 962.5)" fill="#dadada"></ellipse><g mask="url(#hm4)"><ellipse cx="1396.8" cy="962.5" rx="24.5" ry="23.6" transform="rotate(60 1396.8 962.5)" fill="url(#hg4)"></ellipse></g>
<polygon points="960.1,287.6 972.4,302.4 982.2,342.9 994.5,356.8 1000.7,392.1 976.7,362.9" fill="#45546f" stroke="#45546f" stroke-width=".6" stroke-linejoin="round"></polygon>
<polygon points="960.1,287.6 1010.5,265.1 1023.7,279.3 972.4,302.4" fill="#677ba1" stroke="#677ba1" stroke-width=".6" stroke-linejoin="round"></polygon>
<polygon points="972.4,302.4 1023.7,279.3 1028.3,318.3 982.2,342.9" fill="#404e69" stroke="#404e69" stroke-width=".6" stroke-linejoin="round"></polygon>
<polygon points="982.2,342.9 1028.3,318.3 1042.2,333.7 994.5,356.8" fill="#677ba1" stroke="#677ba1" stroke-width=".6" stroke-linejoin="round"></polygon>
<polygon points="994.5,356.8 1042.2,333.7 1047.7,369.1 1000.7,392.1" fill="#404e69" stroke="#404e69" stroke-width=".6" stroke-linejoin="round"></polygon>
<g transform="rotate(-28 1001.6 311.3)"><ellipse cx="1001.6" cy="311.3" rx="13" ry="9.5" fill="#58709a"></ellipse><ellipse cx="1003.6" cy="312.8" rx="11" ry="8" fill="#6d86ad"></ellipse></g>
<polygon points="1155.9,198.4 1169.1,210.7 1170.7,251.6 1182.1,266.1 1183.6,301.4 1159.9,275.3" fill="#2f5f7b" stroke="#2f5f7b" stroke-width=".6" stroke-linejoin="round"></polygon>
<polygon points="1155.9,198.4 1200.5,179.1 1212.8,190.7 1169.1,210.7" fill="#4688a8" stroke="#4688a8" stroke-width=".6" stroke-linejoin="round"></polygon>
<polygon points="1169.1,210.7 1212.8,190.7 1213.7,230.1 1170.7,251.6" fill="#2c566e" stroke="#2c566e" stroke-width=".6" stroke-linejoin="round"></polygon>
<polygon points="1170.7,251.6 1213.7,230.1 1224.5,243.0 1182.1,266.1" fill="#4688a8" stroke="#4688a8" stroke-width=".6" stroke-linejoin="round"></polygon>
<polygon points="1182.1,266.1 1224.5,243.0 1225.1,279.9 1183.6,301.4" fill="#2c566e" stroke="#2c566e" stroke-width=".6" stroke-linejoin="round"></polygon>
<g transform="rotate(-28 1191.9 221.5)"><ellipse cx="1191.9" cy="221.5" rx="10.5" ry="8" fill="#3a7fa0"></ellipse><ellipse cx="1193.4" cy="222.7" rx="9" ry="6.8" fill="#4a93b5"></ellipse></g>
<path d="M1234.5,332.5 Q1241,340 1242,347 L1242.6,355.2" fill="none" stroke="#47683a" stroke-width="4.2" stroke-linecap="round"></path><g transform="rotate(45.7 1218.3 318)"><rect x="1189.8" y="306" width="57" height="24" rx="9.5" fill="url(#capg)"></rect></g>
<g transform="rotate(-8.50 1073.2 438.2)"><path d="M1055.2,438.2 V479.5 A18,14.2 0 0 0 1091.2,479.5 V438.2 Z" fill="url(#cdb)"></path><ellipse cx="1073.2" cy="438.2" rx="18" ry="14.2" fill="#46618b"></ellipse></g>
<g transform="rotate(-1.23 1176.4 383.4)"><path d="M1159.0,383.4 V425.2 A17.4,13.3 0 0 0 1193.8000000000002,425.2 V383.4 Z" fill="url(#cgr)"></path><ellipse cx="1176.4" cy="383.4" rx="17.4" ry="13.3" fill="#97a9ae"></ellipse></g>
<polygon points="1122.1,530.7 1175.3,593.7 1176.9,623.8 1125.2,562.9" fill="#545679" stroke="#545679" stroke-width=".6" stroke-linejoin="round"></polygon>
<polygon points="1175.3,593.7 1387.5,463.6 1382.2,496.2 1176.9,623.8" fill="#4c4d6b" stroke="#4c4d6b" stroke-width=".6" stroke-linejoin="round"></polygon>
<polygon points="1122.1,530.7 1334.6,408.3 1387.5,463.6 1175.3,593.7" fill="#787aa2" stroke="#787aa2" stroke-width=".6" stroke-linejoin="round"></polygon>
<g transform="rotate(14.08 1392 654.2)"><path d="M1373.3,654.2 V689.5617024477046 A18.7,16 0 0 0 1410.7,689.5617024477046 V654.2 Z" fill="url(#cbe)"></path><ellipse cx="1392" cy="654.2" rx="18.7" ry="16" fill="#c2bda4"></ellipse></g>
<polygon points="1230.7,734.4 1352.8,885.0 1349.1,898.9 1230.1,752.2" fill="#985537" stroke="#985537" stroke-width=".6" stroke-linejoin="round"></polygon>
<polygon points="1352.8,885.0 1404.5,846.0 1402.9,859.8 1349.1,898.9" fill="#c8734b" stroke="#c8734b" stroke-width=".6" stroke-linejoin="round"></polygon>
<polygon points="1230.7,734.4 1282.4,699.3 1404.5,846.0 1352.8,885.0" fill="#d37b52" stroke="#d37b52" stroke-width=".6" stroke-linejoin="round"></polygon>
<path d="M1479,694 Q1473,688 1469.5,689 Q1465,691 1466.7,698" fill="none" stroke="#8ba5c1" stroke-width="4.2" stroke-linecap="round"></path><path d="M1520.5,739.5 Q1527.5,745 1527.6,751 Q1527.3,757 1523.7,760.9" fill="none" stroke="#8ba5c1" stroke-width="4.2" stroke-linecap="round"></path><g transform="rotate(48.4 1499.3 718.4)"><rect x="1465.3" y="705.4" width="68" height="26" rx="10" fill="url(#capb)"></rect></g>
<polygon points="1285.9,207.2 1667.1,580.4 1630.5,639.2 1280.2,282.9" fill="#4d6c38" stroke="#4d6c38" stroke-width=".6" stroke-linejoin="round"></polygon>
<polygon points="1285.9,207.2 1308.7,196.6 1306.2,211.4 1677.2,573.6 1667.1,580.4" fill="#6f9d52" stroke="#6f9d52" stroke-width=".6" stroke-linejoin="round"></polygon>
<polygon points="1630.5,639.2 1667.1,580.4 1677.2,573.6 1686.1,560.8 1699.7,578.2 1687.5,596.1" fill="#466433" stroke="#466433" stroke-width=".6" stroke-linejoin="round"></polygon>
<clipPath id="cylclip"><path d="M1306.2,211.4 L1308.7,188 Q1310,180 1317,177 L1350.5,162.7 L1911,684 L1911,689 L1863,734.5 L1686.1,560.8 L1677.2,573.6 Z"></path></clipPath>
<g clip-path="url(#cylclip)">
<path d="M1306.2,211.4 L1308.7,188 Q1310,180 1317,177 L1350.5,162.7 L1911,684 L1911,689 L1863,734.5 L1686.1,560.8 L1677.2,573.6 Z" fill="#5f8a47"></path>
<polygon points="1276.5,182.4 1677.2,573.6 1679.3,571.3 1278.3,180.5" fill="#4d6c38"></polygon>
<polygon points="1278.1,180.7 1679.1,571.5 1681.2,569.2 1279.8,178.8" fill="#4d6c38"></polygon>
<polygon points="1279.6,179.0 1681.0,569.5 1683.1,567.2 1281.4,177.1" fill="#4d6c38"></polygon>
<polygon points="1281.2,177.3 1682.9,567.4 1685.0,565.1 1282.9,175.4" fill="#4d6c38"></polygon>
<polygon points="1282.8,175.6 1684.7,565.3 1686.8,563.0 1284.5,173.7" fill="#4d6c38"></polygon>
<polygon points="1284.3,173.9 1686.6,563.2 1688.7,560.9 1286.0,172.0" fill="#4d6c38"></polygon>
<polygon points="1285.9,172.1 1688.5,561.2 1690.6,558.9 1287.6,170.2" fill="#51733d"></polygon>
<polygon points="1287.4,170.4 1690.4,559.1 1692.5,556.8 1289.2,168.5" fill="#567b42"></polygon>
<polygon points="1289.0,168.7 1692.3,557.0 1694.4,554.7 1290.7,166.8" fill="#5e8847"></polygon>
<polygon points="1290.5,167.0 1694.2,555.0 1696.3,552.7 1292.3,165.1" fill="#65924c"></polygon>
<polygon points="1292.1,165.3 1696.1,552.9 1698.2,550.6 1293.8,163.4" fill="#69974f"></polygon>
<polygon points="1293.7,163.6 1697.9,550.8 1700.0,548.5 1295.4,161.7" fill="#6d9c51"></polygon>
<polygon points="1295.2,161.9 1699.8,548.7 1701.9,546.4 1296.9,160.0" fill="#6f9e52"></polygon>
<polygon points="1296.8,160.2 1701.7,546.7 1703.8,544.4 1298.5,158.3" fill="#6f9f53"></polygon>
<polygon points="1298.3,158.4 1703.6,544.6 1705.7,542.3 1300.1,156.5" fill="#70a054"></polygon>
<polygon points="1299.9,156.7 1705.5,542.5 1707.6,540.2 1301.6,154.8" fill="#71a154"></polygon>
<polygon points="1301.4,155.0 1707.4,540.5 1709.5,538.2 1303.2,153.1" fill="#71a154"></polygon>
<polygon points="1303.0,153.3 1709.3,538.4 1711.4,536.1 1304.7,151.4" fill="#70a053"></polygon>
<polygon points="1304.6,151.6 1711.1,536.3 1713.2,534.0 1306.3,149.7" fill="#70a053"></polygon>
<polygon points="1306.1,149.9 1713.0,534.2 1715.1,531.9 1307.9,148.0" fill="#709f53"></polygon>
<polygon points="1307.7,148.2 1714.9,532.2 1717.0,529.9 1309.4,146.3" fill="#709f53"></polygon>
<polygon points="1309.2,146.5 1716.8,530.1 1718.9,527.8 1311.0,144.6" fill="#6f9e52"></polygon>
<polygon points="1310.8,144.7 1718.7,528.0 1720.8,525.7 1312.5,142.8" fill="#6f9e52"></polygon>
<polygon points="1312.4,143.0 1720.6,526.0 1722.7,523.7 1314.1,141.1" fill="#6d9b50"></polygon>
<polygon points="1313.9,141.3 1722.5,523.9 1724.6,521.6 1315.6,139.4" fill="#6b994f"></polygon>
<polygon points="1315.5,139.6 1724.3,521.8 1726.4,519.5 1317.2,137.7" fill="#68944c"></polygon>
<polygon points="1317.0,137.9 1726.2,519.7 1728.3,517.4 1318.8,136.0" fill="#618c48"></polygon>
<polygon points="1318.6,136.2 1728.1,517.7 1730.2,515.4 1320.3,134.3" fill="#597f41"></polygon>
<polygon points="1686.1,560.8 1880.7,751.9 1882.6,750.0 1687.8,559.0" fill="#4d6c38"></polygon>
<polygon points="1687.7,559.2 1882.4,750.1 1884.3,748.2 1689.4,557.4" fill="#4d6c38"></polygon>
<polygon points="1689.2,557.6 1884.1,748.4 1886.1,746.5 1691.0,555.8" fill="#4d6c38"></polygon>
<polygon points="1690.8,556.0 1885.9,746.7 1887.8,744.8 1692.5,554.2" fill="#4d6c38"></polygon>
<polygon points="1692.4,554.3 1887.6,745.0 1889.5,743.1 1694.1,552.5" fill="#50713b"></polygon>
<polygon points="1693.9,552.7 1889.3,743.2 1891.3,741.3 1695.7,550.9" fill="#547840"></polygon>
<polygon points="1695.5,551.1 1891.1,741.5 1893.0,739.6 1697.3,549.3" fill="#5c8445"></polygon>
<polygon points="1697.1,549.5 1892.8,739.8 1894.7,737.9 1698.8,547.7" fill="#64904b"></polygon>
<polygon points="1698.6,547.9 1894.5,738.1 1896.4,736.2 1700.4,546.1" fill="#68954e"></polygon>
<polygon points="1700.2,546.3 1896.3,736.4 1898.2,734.4 1702.0,544.5" fill="#6c9a51"></polygon>
<polygon points="1701.8,544.7 1898.0,734.6 1899.9,732.7 1703.5,542.9" fill="#6e9e52"></polygon>
<polygon points="1703.3,543.0 1899.7,732.9 1901.6,731.0 1705.1,541.2" fill="#6f9f53"></polygon>
<polygon points="1704.9,541.4 1901.4,731.2 1903.4,729.3 1706.7,539.6" fill="#6f9e52"></polygon>
<polygon points="1706.5,539.8 1903.2,729.5 1905.1,727.5 1708.2,538.0" fill="#6f9f53"></polygon>
<polygon points="1708.0,538.2 1904.9,727.7 1906.8,725.8 1709.8,536.4" fill="#70a054"></polygon>
<polygon points="1709.6,536.6 1906.6,726.0 1908.5,724.1 1711.4,534.8" fill="#71a154"></polygon>
<polygon points="1711.2,535.0 1908.4,724.3 1910.3,722.4 1712.9,533.2" fill="#71a154"></polygon>
<polygon points="1712.8,533.4 1910.1,722.6 1912.0,720.6 1714.5,531.6" fill="#70a053"></polygon>
<polygon points="1714.3,531.7 1911.8,720.8 1913.7,718.9 1716.1,529.9" fill="#70a053"></polygon>
<polygon points="1715.9,530.1 1913.5,719.1 1915.5,717.2 1717.6,528.3" fill="#709f53"></polygon>
<polygon points="1717.5,528.5 1915.3,717.4 1917.2,715.5 1719.2,526.7" fill="#709f53"></polygon>
<polygon points="1719.0,526.9 1917.0,715.7 1918.9,713.7 1720.8,525.1" fill="#6f9e52"></polygon>
<polygon points="1720.6,525.3 1918.7,713.9 1920.6,712.0 1722.3,523.5" fill="#6f9e52"></polygon>
<polygon points="1722.2,523.7 1920.5,712.2 1922.4,710.3 1723.9,521.9" fill="#6d9b50"></polygon>
<polygon points="1723.7,522.1 1922.2,710.5 1924.1,708.6 1725.5,520.3" fill="#6b994f"></polygon>
<polygon points="1725.3,520.4 1923.9,708.8 1925.8,706.8 1727.0,518.6" fill="#68944c"></polygon>
<polygon points="1726.9,518.8 1925.6,707.0 1927.6,705.1 1728.6,517.0" fill="#618c48"></polygon>
<polygon points="1728.4,517.2 1927.4,705.3 1929.3,703.4 1730.2,515.4" fill="#597f41"></polygon>
</g>
</svg>
<!--SCENE-->
<div class="a" style="left:1638px;top:114px;width:240px;height:400px;background:rgba(244,244,244,.8);border:1px solid #aed3e4;border-radius:4px"></div>
<svg class="a" style="left:1651.3px;top:128.2px" width="9" height="9" viewBox="0 0 9 9"><rect x=".5" y=".5" width="8" height="8" rx="1.6" fill="#f6f6ff" stroke="#5c5cba"></rect><path d="M2.3 4.5H6.7" stroke="#2a2ad2" stroke-width="1.1"></path></svg>
<span class="tx" style="left:1663.3px;top:126px;font-size:11px;line-height:13px;color:#5c9ab8">Scene</span>
<svg class="a" style="left:1667.0px;top:147.5px" width="9" height="9" viewBox="0 0 9 9"><rect x=".5" y=".5" width="8" height="8" rx="1.6" fill="#f6f6ff" stroke="#5c5cba"></rect><path d="M2.3 4.5H6.7" stroke="#2a2ad2" stroke-width="1.1"></path></svg>
<span class="tx" style="left:1679.0px;top:145px;font-size:11px;line-height:13px;color:#6a9fbd">pcb-simplified - ref_mesh</span>
<svg class="a" style="left:1683.0px;top:167.1px" width="9" height="9" viewBox="0 0 9 9"><rect x=".5" y=".5" width="8" height="8" rx="1.6" fill="#f6f6ff" stroke="#5c5cba"></rect><path d="M2.3 4.5H6.7 M4.5 2.3V6.7" stroke="#2a2ad2" stroke-width="1.1"></path></svg>
<svg class="a" style="left:1696.7px;top:167.4px" width="12" height="8" viewBox="0 0 12 8"><path d="M0.3 4Q6 -2.4 11.7 4Q6 10.4 0.3 4Z" fill="#8a8a8a"></path><path d="M2.2 4Q6 0 9.8 4Q6 8 2.2 4Z" fill="#eee"></path><circle cx="6" cy="3.9" r="2.3" fill="#5a5a5a"></circle><circle cx="5.2" cy="3.1" r=".8" fill="#ddd"></circle></svg>
<span class="tx" style="left:1713.0px;top:165px;font-size:11px;line-height:13px;color:#3a8cb5;font-weight:bold">volumeOnGeoVolumes_10</span>
<svg class="a" style="left:1683.0px;top:187.1px" width="9" height="9" viewBox="0 0 9 9"><rect x=".5" y=".5" width="8" height="8" rx="1.6" fill="#f6f6ff" stroke="#5c5cba"></rect><path d="M2.3 4.5H6.7 M4.5 2.3V6.7" stroke="#2a2ad2" stroke-width="1.1"></path></svg>
<svg class="a" style="left:1696.7px;top:187.4px" width="12" height="8" viewBox="0 0 12 8"><path d="M0.3 4Q6 -2.4 11.7 4Q6 10.4 0.3 4Z" fill="#8a8a8a"></path><path d="M2.2 4Q6 0 9.8 4Q6 8 2.2 4Z" fill="#eee"></path><circle cx="6" cy="3.9" r="2.3" fill="#5a5a5a"></circle><circle cx="5.2" cy="3.1" r=".8" fill="#ddd"></circle></svg>
<span class="tx" style="left:1713.0px;top:185px;font-size:11px;line-height:13px;color:#3a8cb5;font-weight:bold">volumeOnGeoVolumes_9</span>
<svg class="a" style="left:1683.0px;top:207.1px" width="9" height="9" viewBox="0 0 9 9"><rect x=".5" y=".5" width="8" height="8" rx="1.6" fill="#f6f6ff" stroke="#5c5cba"></rect><path d="M2.3 4.5H6.7 M4.5 2.3V6.7" stroke="#2a2ad2" stroke-width="1.1"></path></svg>
<svg class="a" style="left:1696.7px;top:207.4px" width="12" height="8" viewBox="0 0 12 8"><path d="M0.3 4Q6 -2.4 11.7 4Q6 10.4 0.3 4Z" fill="#8a8a8a"></path><path d="M2.2 4Q6 0 9.8 4Q6 8 2.2 4Z" fill="#eee"></path><circle cx="6" cy="3.9" r="2.3" fill="#5a5a5a"></circle><circle cx="5.2" cy="3.1" r=".8" fill="#ddd"></circle></svg>
<span class="tx" style="left:1713.0px;top:205px;font-size:11px;line-height:13px;color:#3a8cb5;font-weight:bold">volumeOnGeoVolumes_8</span>
<svg class="a" style="left:1683.0px;top:227.1px" width="9" height="9" viewBox="0 0 9 9"><rect x=".5" y=".5" width="8" height="8" rx="1.6" fill="#f6f6ff" stroke="#5c5cba"></rect><path d="M2.3 4.5H6.7 M4.5 2.3V6.7" stroke="#2a2ad2" stroke-width="1.1"></path></svg>
<svg class="a" style="left:1696.7px;top:227.4px" width="12" height="8" viewBox="0 0 12 8"><path d="M0.3 4Q6 -2.4 11.7 4Q6 10.4 0.3 4Z" fill="#8a8a8a"></path><path d="M2.2 4Q6 0 9.8 4Q6 8 2.2 4Z" fill="#eee"></path><circle cx="6" cy="3.9" r="2.3" fill="#5a5a5a"></circle><circle cx="5.2" cy="3.1" r=".8" fill="#ddd"></circle></svg>
<span class="tx" style="left:1713.0px;top:225px;font-size:11px;line-height:13px;color:#3a8cb5;font-weight:bold">volumeOnGeoVolumes_7</span>
<svg class="a" style="left:1683.0px;top:247.1px" width="9" height="9" viewBox="0 0 9 9"><rect x=".5" y=".5" width="8" height="8" rx="1.6" fill="#f6f6ff" stroke="#5c5cba"></rect><path d="M2.3 4.5H6.7 M4.5 2.3V6.7" stroke="#2a2ad2" stroke-width="1.1"></path></svg>
<svg class="a" style="left:1696.7px;top:247.4px" width="12" height="8" viewBox="0 0 12 8"><path d="M0.3 4Q6 -2.4 11.7 4Q6 10.4 0.3 4Z" fill="#8a8a8a"></path><path d="M2.2 4Q6 0 9.8 4Q6 8 2.2 4Z" fill="#eee"></path><circle cx="6" cy="3.9" r="2.3" fill="#5a5a5a"></circle><circle cx="5.2" cy="3.1" r=".8" fill="#ddd"></circle></svg>
<span class="tx" style="left:1713.0px;top:245px;font-size:11px;line-height:13px;color:#3a8cb5;font-weight:bold">volumeOnGeoVolumes_6</span>
<svg class="a" style="left:1683.0px;top:267.1px" width="9" height="9" viewBox="0 0 9 9"><rect x=".5" y=".5" width="8" height="8" rx="1.6" fill="#f6f6ff" stroke="#5c5cba"></rect><path d="M2.3 4.5H6.7 M4.5 2.3V6.7" stroke="#2a2ad2" stroke-width="1.1"></path></svg>
<svg class="a" style="left:1696.7px;top:267.4px" width="12" height="8" viewBox="0 0 12 8"><path d="M0.3 4Q6 -2.4 11.7 4Q6 10.4 0.3 4Z" fill="#8a8a8a"></path><path d="M2.2 4Q6 0 9.8 4Q6 8 2.2 4Z" fill="#eee"></path><circle cx="6" cy="3.9" r="2.3" fill="#5a5a5a"></circle><circle cx="5.2" cy="3.1" r=".8" fill="#ddd"></circle></svg>
<span class="tx" style="left:1713.0px;top:265px;font-size:11px;line-height:13px;color:#3a8cb5;font-weight:bold">volumeOnGeoVolumes_5</span>
<svg class="a" style="left:1683.0px;top:287.1px" width="9" height="9" viewBox="0 0 9 9"><rect x=".5" y=".5" width="8" height="8" rx="1.6" fill="#f6f6ff" stroke="#5c5cba"></rect><path d="M2.3 4.5H6.7 M4.5 2.3V6.7" stroke="#2a2ad2" stroke-width="1.1"></path></svg>
<svg class="a" style="left:1696.7px;top:287.4px" width="12" height="8" viewBox="0 0 12 8"><path d="M0.3 4Q6 -2.4 11.7 4Q6 10.4 0.3 4Z" fill="#8a8a8a"></path><path d="M2.2 4Q6 0 9.8 4Q6 8 2.2 4Z" fill="#eee"></path><circle cx="6" cy="3.9" r="2.3" fill="#5a5a5a"></circle><circle cx="5.2" cy="3.1" r=".8" fill="#ddd"></circle></svg>
<span class="tx" style="left:1713.0px;top:285px;font-size:11px;line-height:13px;color:#7fb0c8">volumeOnGeoVolumes_4</span>
<svg class="a" style="left:1683.0px;top:307.1px" width="9" height="9" viewBox="0 0 9 9"><rect x=".5" y=".5" width="8" height="8" rx="1.6" fill="#f6f6ff" stroke="#5c5cba"></rect><path d="M2.3 4.5H6.7 M4.5 2.3V6.7" stroke="#2a2ad2" stroke-width="1.1"></path></svg>
<svg class="a" style="left:1696.7px;top:307.4px" width="12" height="8" viewBox="0 0 12 8"><path d="M0.3 4Q6 -2.4 11.7 4Q6 10.4 0.3 4Z" fill="#8a8a8a"></path><path d="M2.2 4Q6 0 9.8 4Q6 8 2.2 4Z" fill="#eee"></path><circle cx="6" cy="3.9" r="2.3" fill="#5a5a5a"></circle><circle cx="5.2" cy="3.1" r=".8" fill="#ddd"></circle></svg>
<span class="tx" style="left:1713.0px;top:305px;font-size:11px;line-height:13px;color:#3a8cb5;font-weight:bold">volumeOnGeoVolumes_3</span>
<svg class="a" style="left:1683.0px;top:327.1px" width="9" height="9" viewBox="0 0 9 9"><rect x=".5" y=".5" width="8" height="8" rx="1.6" fill="#f6f6ff" stroke="#5c5cba"></rect><path d="M2.3 4.5H6.7 M4.5 2.3V6.7" stroke="#2a2ad2" stroke-width="1.1"></path></svg>
<svg class="a" style="left:1696.7px;top:327.4px" width="12" height="8" viewBox="0 0 12 8"><path d="M0.3 4Q6 -2.4 11.7 4Q6 10.4 0.3 4Z" fill="#8a8a8a"></path><path d="M2.2 4Q6 0 9.8 4Q6 8 2.2 4Z" fill="#eee"></path><circle cx="6" cy="3.9" r="2.3" fill="#5a5a5a"></circle><circle cx="5.2" cy="3.1" r=".8" fill="#ddd"></circle></svg>
<span class="tx" style="left:1713.0px;top:325px;font-size:11px;line-height:13px;color:#3a8cb5;font-weight:bold">volumeOnGeoVolumes_2</span>
<svg class="a" style="left:1683.0px;top:347.1px" width="9" height="9" viewBox="0 0 9 9"><rect x=".5" y=".5" width="8" height="8" rx="1.6" fill="#f6f6ff" stroke="#5c5cba"></rect><path d="M2.3 4.5H6.7 M4.5 2.3V6.7" stroke="#2a2ad2" stroke-width="1.1"></path></svg>
<svg class="a" style="left:1696.7px;top:347.4px" width="12" height="8" viewBox="0 0 12 8"><path d="M0.3 4Q6 -2.4 11.7 4Q6 10.4 0.3 4Z" fill="#8a8a8a"></path><path d="M2.2 4Q6 0 9.8 4Q6 8 2.2 4Z" fill="#eee"></path><circle cx="6" cy="3.9" r="2.3" fill="#5a5a5a"></circle><circle cx="5.2" cy="3.1" r=".8" fill="#ddd"></circle></svg>
<span class="tx" style="left:1713.0px;top:345px;font-size:11px;line-height:13px;color:#3a8cb5;font-weight:bold">volumeOnGeoVolumes_1</span>
<svg class="a" style="left:1683.0px;top:367.1px" width="9" height="9" viewBox="0 0 9 9"><rect x=".5" y=".5" width="8" height="8" rx="1.6" fill="#f6f6ff" stroke="#5c5cba"></rect><path d="M2.3 4.5H6.7 M4.5 2.3V6.7" stroke="#2a2ad2" stroke-width="1.1"></path></svg>
<svg class="a" style="left:1696.7px;top:367.4px" width="12" height="8" viewBox="0 0 12 8"><path d="M0.3 4Q6 -2.4 11.7 4Q6 10.4 0.3 4Z" fill="#8a8a8a"></path><path d="M2.2 4Q6 0 9.8 4Q6 8 2.2 4Z" fill="#eee"></path><circle cx="6" cy="3.9" r="2.3" fill="#5a5a5a"></circle><circle cx="5.2" cy="3.1" r=".8" fill="#ddd"></circle></svg>
<span class="tx" style="left:1713.0px;top:365px;font-size:11px;line-height:13px;color:#3a8cb5;font-weight:bold">volumeOnGeoVolumes_0</span>
<svg class="a" style="left:1683.0px;top:387.6px" width="9" height="9" viewBox="0 0 9 9"><rect x=".5" y=".5" width="8" height="8" rx="1.6" fill="#f6f6ff" stroke="#5c5cba"></rect><path d="M2.3 4.5H6.7" stroke="#2a2ad2" stroke-width="1.1"></path></svg>
<span class="tx" style="left:1695.4px;top:385px;font-size:11px;line-height:13px;color:#6a9fbd">Topological Entity Sets</span>
<span class="tx" style="left:1718.0px;top:408px;font-size:11px;line-height:13px;color:#5f9fc0">board_contacts</span>
<span class="tx" style="left:1718.0px;top:434px;font-size:11px;line-height:13px;color:#5f9fc0">component_contacts</span>
<span class="tx" style="left:1718.0px;top:460px;font-size:11px;line-height:13px;color:#5f9fc0">board_fixation</span>
<span class="tx" style="left:1718.0px;top:486px;font-size:11px;line-height:13px;color:#5f9fc0">convective_surfaces</span>
<svg class="a" style="left:1867px;top:504px" width="9" height="9" viewBox="0 0 9 9"><path d="M8.5 0.5L0.5 8.5M8.5 4.5L4.5 8.5" stroke="#666" stroke-width="1"></path></svg>
<svg class="a" style="left:850px;top:970px" width="100" height="70" viewBox="850 970 100 70">
<path d="M894.7 1024.8L875 1002.5" stroke="#44aa44" stroke-width="1.6"></path><rect x="872.3" y="999.8" width="4.4" height="4.4" fill="#3c963c" transform="rotate(40 874.5 1002)"></rect>
<path d="M894.7 1024.8L920 1009.5" stroke="#d42a2a" stroke-width="1.6"></path><path d="M917.5 1007.3L922.5 1008L920 1012.5Z" fill="#b81c1c"></path>
<path d="M894.7 1024.8L899 1005" stroke="#6a6ae8" stroke-width="2"></path><ellipse cx="899.3" cy="1003.8" rx="4" ry="3.2" fill="#6565e6"></ellipse>
<text x="861" y="997.8" font-family="Liberation Sans" font-style="italic" font-weight="bold" font-size="20" fill="#3db53d" textLength="12.5" lengthAdjust="spacingAndGlyphs">Y</text>
<text x="890.5" y="999.9" font-family="Liberation Sans" font-style="italic" font-weight="bold" font-size="30.5" fill="#6a6af0">Z</text>
<text x="921.5" y="1006.8" font-family="Liberation Sans" font-style="italic" font-weight="bold" font-size="20" fill="#e01414" textLength="12.5" lengthAdjust="spacingAndGlyphs">X</text>
</svg>
<div class="a" style="left:824px;top:1072px;width:199px;height:27px;background:rgba(255,255,255,.45);border:1px solid #d0dfe6;border-radius:3px"></div>
<span class="tx" style="left:832.8px;top:1078.6px;font-size:11px;line-height:13px;color:#9ab4c2">faceGroupOnGeoFaces_0</span>
<svg class="a" style="left:1012px;top:1088px" width="9" height="9" viewBox="0 0 9 9"><path d="M8.5 0.5L0.5 8.5M8.5 4.5L4.5 8.5" stroke="#777" stroke-width="1"></path></svg>
<div class="a" style="left:1765px;top:1077px;width:123px;height:30px;background:#00609d;border-top:2px solid #006ab2;border-radius:3px 3px 0 0"></div>
<svg class="a" style="left:1775px;top:1086px" width="25" height="18" viewBox="0 0 25 18"><ellipse cx="12" cy="8" rx="11.5" ry="7.5" fill="#fff"></ellipse><path d="M17 12L23 17.5L14 14.5Z" fill="#fff"></path><rect x="5.6" y="4.2" width="12.8" height="8.4" rx="1" fill="#00609d"></rect><rect x="10.5" y="2.9" width="4.5" height="2" fill="#00609d"></rect><circle cx="12" cy="8.4" r="2.9" fill="#fff"></circle><circle cx="12" cy="8.4" r="1.6" fill="#00609d"></circle></svg>
<span class="tx" style="left:1808.3px;top:1088px;font-size:12px;line-height:14px;color:#fff">Report a bug</span>
<!--OVERLAY-->

</body></html>
